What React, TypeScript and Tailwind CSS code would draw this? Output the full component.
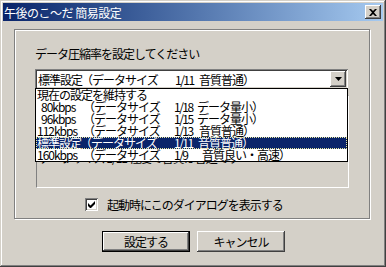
import React from 'react'

const raised =
  'shadow-[inset_-1px_-1px_#404040,inset_1px_1px_#ffffff,inset_-2px_-2px_#808080,inset_2px_2px_#d4d0c8]'
const sunken =
  'shadow-[inset_1px_1px_#808080,inset_-1px_-1px_#ffffff,inset_2px_2px_#404040,inset_-2px_-2px_#d4d0c8]'

type RowData = {
  rate: string
  ratio?: string
  note?: string
  ratePad?: string
  notePad?: string
  selected?: boolean
}

const ROWS: RowData[] = [
  { rate: '現在の設定を維持する' },
  { rate: '80kbps', ratio: '1/18', note: 'データ量小）', ratePad: 'pl-[4px] w-[46px]', notePad: 'pl-0' },
  { rate: '96kbps', ratio: '1/15', note: 'データ量小）', ratePad: 'pl-[4px] w-[46px]', notePad: 'pl-0' },
  { rate: '112kbps', ratio: '1/13', note: '音質普通）', ratePad: 'w-[46px]', notePad: 'pl-[2px]' },
  { rate: '標準設定', ratio: '1/11', note: '音質普通）', ratePad: 'w-[43px]', notePad: 'pl-[1px]', selected: true },
  { rate: '160kbps', ratio: '1/9', note: '音質良い・高速）', ratePad: 'w-[46px]', notePad: 'pl-[5px]' },
]

// one line of the list: rate | （データサイズ | ratio | note
function Line({ rate, ratio, note, ratePad, notePad }: RowData) {
  if (!ratio) return <span>{rate}</span>
  return (
    <>
      <span className={`shrink-0 ${ratePad}`}>{rate}</span>
      <span className={`shrink-0 ${rate === '標準設定' ? 'w-[94px]' : 'w-[91px]'}`}>（データサイズ</span>
      <span className="shrink-0 w-[23px] tracking-[-1.5px]">{ratio}</span>
      <span className={`shrink-0 ${notePad}`}>{note}</span>
    </>
  )
}

export default function App() {
  return (
    <div
      className="w-[386px] h-[267px] bg-[#d4d0c8] p-[3px] text-black text-[12px] leading-[13px] tracking-[-1px] shadow-[inset_-1px_-1px_#404040,inset_1px_1px_#d4d0c8,inset_-2px_-2px_#808080,inset_2px_2px_#ffffff]"
      style={{ fontFamily: '"Noto Sans CJK JP", "Liberation Sans", sans-serif' }}
    >
      {/* Title bar */}
      <div className="h-[18px] flex items-center justify-between pl-[1px] pr-[2px] bg-gradient-to-r from-[#0a246a] to-[#a6caf0]">
        <span className="text-white tracking-[-0.5px]">午後のこ～だ 簡易設定</span>
        <div className={`w-[16px] h-[14px] bg-[#d4d0c8] flex items-center justify-center ${raised}`}>
          <svg width="8" height="7" viewBox="0 0 8 7">
            <path d="M0 0h2l2 2 2-2h2L5 3.5 8 7H6L4 5 2 7H0l3-3.5z" fill="#000" />
          </svg>
        </div>
      </div>

      {/* Body */}
      <div className="pl-[11px] pt-[8px]">
        <div className="w-[356px] h-[190px] border border-[#808080] shadow-[inset_1px_1px_#ffffff,1px_1px_#ffffff] pl-[20px] pt-[17px]">
          <div>データ圧縮率を設定してください</div>

          {/* Combo */}
          <div className="relative mt-[9px] w-[313px]">
            <div className={`h-[20px] bg-white flex items-center pl-[3px] pr-[2px] ${sunken}`}>
              <div className="flex-1 flex whitespace-pre">
                <Line {...ROWS[4]} />
              </div>
              <div className={`w-[16px] h-[16px] bg-[#d4d0c8] flex items-center justify-center ${raised}`}>
                <svg width="7" height="4" viewBox="0 0 7 4">
                  <path d="M0 0h7L3.5 4z" fill="#000" />
                </svg>
              </div>
            </div>

            {/* Open drop list */}
            <div className="absolute left-0 top-[19px] w-[313px] bg-white border border-black z-10">
              {ROWS.map((r, i) => (
                <div
                  key={i}
                  className={`h-[12px] flex items-center whitespace-pre leading-[12px] pl-[1px] ${
                    r.selected
                      ? 'bg-[#0a246a] text-white outline outline-1 outline-dotted outline-[#e8e8a0] -outline-offset-1'
                      : ''
                  }`}
                >
                  <Line {...r} />
                </div>
              ))}
            </div>
          </div>

          {/* Description panel (mostly covered by list) */}
          <div className="mt-[6px] ml-[1px] w-[313px] h-[93px] border-t border-l border-[#808080] border-b border-r border-b-white border-r-white pl-[2px] pt-[55px]">
            <div>データサイズ 1/11 程度で音質は普通です</div>
          </div>

          {/* Checkbox */}
          <div className="mt-[10px] ml-[50px] flex items-center gap-[9px]">
            <div className={`w-[13px] h-[13px] bg-white flex items-center justify-center ${sunken}`}>
              <svg width="7" height="7" viewBox="0 0 7 7">
                <path d="M0 2v3l2 2h1l4-4V0L2.5 4.5z" fill="#000" />
              </svg>
            </div>
            <span>起動時にこのダイアログを表示する</span>
          </div>
        </div>
      </div>

      {/* Buttons */}
      <div className="mt-[12px] flex justify-center gap-[7px] pl-[1px]">
        <div className="w-[88px] h-[21px] border border-black">
          <div className={`h-full bg-[#d4d0c8] flex items-center justify-center ${raised}`}>設定する</div>
        </div>
        <div className={`w-[88px] h-[21px] bg-[#d4d0c8] flex items-center justify-center ${raised}`}>キャンセル</div>
      </div>
    </div>
  )
}
